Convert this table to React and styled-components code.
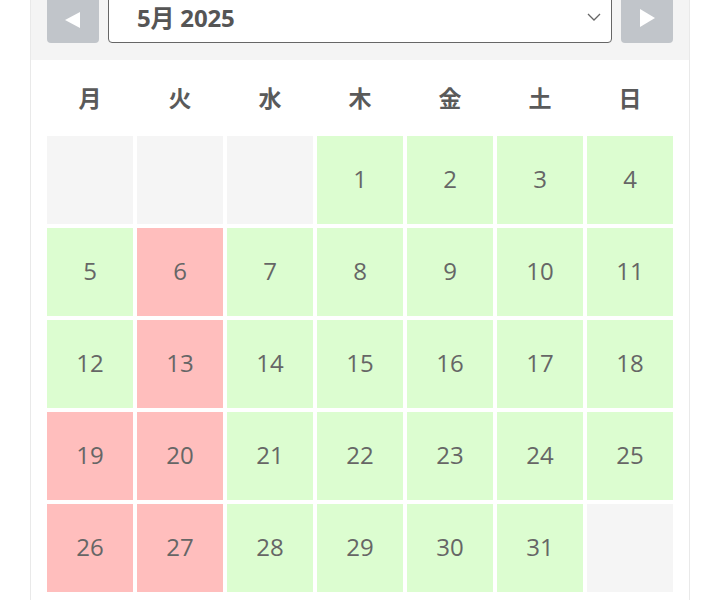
import React from "react";
import styled, { createGlobalStyle } from "styled-components";

const Global = createGlobalStyle`
  html, body { margin: 0; padding: 0; background: #ffffff; }
  body { font-family: "Open Sans", "Noto Sans CJK JP", sans-serif; overflow: hidden; }
`;

const Page = styled.div`
  padding-left: 30px;
  margin-top: -23px;
`;

const Panel = styled.div`
  width: 658px;
  border: 1px solid #e9e9e9;
  border-top: none;
  background: #ffffff;
`;

const Header = styled.div`
  display: flex;
  gap: 9px;
  align-items: stretch;
  background: #f4f4f4;
  padding: 16px 16px 17px 16px;
`;

const NavButton = styled.button`
  width: 52px;
  height: 50px;
  flex: none;
  border: none;
  border-radius: 4px;
  background: #c1c5ca;
  display: flex;
  align-items: center;
  justify-content: center;
  padding: 0;
  padding-top: ${(p) => (p.$dir === "prev" ? "3px" : "0")};
  cursor: pointer;
`;

const Select = styled.div`
  flex: 1;
  height: 50px;
  box-sizing: border-box;
  border: 1px solid #666666;
  border-radius: 4px;
  background: #ffffff;
  display: flex;
  align-items: center;
  justify-content: space-between;
  padding: 0 10px 3px 28px;
  font-family: "Open Sans", "Noto Sans CJK JP", sans-serif;
  font-weight: 700;
  font-size: 24px;
  color: #555555;
  letter-spacing: -0.2px;
`;

const Body = styled.div`
  padding: 16px;
`;

const WeekRow = styled.div`
  display: grid;
  grid-template-columns: repeat(7, 86px);
  column-gap: 4px;
  height: 60px;
  box-sizing: border-box;
  padding-bottom: 18px;
  align-items: center;
`;

const WeekDay = styled.div`
  text-align: center;
  font-family: "Noto Sans CJK JP", sans-serif;
  font-weight: 700;
  font-size: 23px;
  color: #5a5a5a;
  line-height: 1;
`;

const Grid = styled.div`
  display: grid;
  grid-template-columns: repeat(7, 86px);
  grid-auto-rows: 88px;
  gap: 4px;
`;

const colors = {
  empty: "#f5f5f5",
  ok: "#dcfdd0",
  ng: "#ffbebd",
};

const Cell = styled.div`
  background: ${(p) => colors[p.$state]};
  display: flex;
  align-items: center;
  justify-content: center;
  box-sizing: border-box;
  padding-bottom: 3px;
  font-family: "Open Sans", sans-serif;
  font-size: 24px;
  color: #666666;
`;

const weekdays = ["月", "火", "水", "木", "金", "土", "日"];
const red = new Set([6, 13, 19, 20, 26, 27]);

const cells = [];
for (let i = 0; i < 3; i++) cells.push({ key: "e" + i, state: "empty" });
for (let d = 1; d <= 31; d++) cells.push({ key: "d" + d, day: d, state: red.has(d) ? "ng" : "ok" });
cells.push({ key: "e-end", state: "empty" });

export default function App() {
  return (
    <>
      <Global />
      <Page>
        <Panel>
          <Header>
            <NavButton $dir="prev" aria-label="前の月">
              <svg width="18" height="18" viewBox="0 0 18 18">
                <polygon points="16,1 16,17 1,9" fill="#ffffff" />
              </svg>
            </NavButton>
            <Select>
              <span>5月 2025</span>
              <svg width="14" height="8" viewBox="0 0 14 8">
                <polyline points="1,1 7,7 13,1" fill="none" stroke="#666" strokeWidth="1.3" />
              </svg>
            </Select>
            <NavButton $dir="next" aria-label="次の月">
              <svg width="18" height="18" viewBox="0 0 18 18">
                <polygon points="2,0 2,18 17,9" fill="#ffffff" />
              </svg>
            </NavButton>
          </Header>
          <Body>
            <WeekRow>
              {weekdays.map((w) => (
                <WeekDay key={w}>{w}</WeekDay>
              ))}
            </WeekRow>
            <Grid>
              {cells.map((c) => (
                <Cell key={c.key} $state={c.state}>
                  {c.day}
                </Cell>
              ))}
            </Grid>
          </Body>
        </Panel>
      </Page>
    </>
  );
}
